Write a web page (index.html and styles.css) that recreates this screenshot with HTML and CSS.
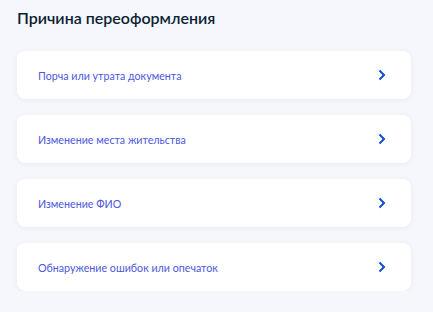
FILE: index.html
```html
<!DOCTYPE html>
<html lang="ru">
<head>
<meta charset="UTF-8">
<title>Причина переоформления</title>
<link rel="stylesheet" href="styles.css">
</head>
<body>
<div class="page">
    <h2>Причина переоформления</h2>
    <div class="reasons">
        <a class="reason" href="#">
            <span>Порча или утрата документа</span>
            <svg class="chevron" width="8" height="12" viewBox="0 0 8 12"><path d="M1.5 1.5 L6 6 L1.5 10.5" fill="none" stroke="#0d4cd3" stroke-width="2"/></svg>
        </a>
        <a class="reason" href="#">
            <span>Изменение места жительства</span>
            <svg class="chevron" width="8" height="12" viewBox="0 0 8 12"><path d="M1.5 1.5 L6 6 L1.5 10.5" fill="none" stroke="#0d4cd3" stroke-width="2"/></svg>
        </a>
        <a class="reason" href="#">
            <span>Изменение ФИО</span>
            <svg class="chevron" width="8" height="12" viewBox="0 0 8 12"><path d="M1.5 1.5 L6 6 L1.5 10.5" fill="none" stroke="#0d4cd3" stroke-width="2"/></svg>
        </a>
        <a class="reason" href="#">
            <span>Обнаружение ошибок или опечаток</span>
            <svg class="chevron" width="8" height="12" viewBox="0 0 8 12"><path d="M1.5 1.5 L6 6 L1.5 10.5" fill="none" stroke="#0d4cd3" stroke-width="2"/></svg>
        </a>
    </div>
</div>
</body>
</html>
```

FILE: styles.css
```css
body {
    margin: 0;
    background: #f5f7fc;
    font-family: Lato, "Open Sans", Arial, sans-serif;
    color: #0b1f33;
}
.page {
    padding: 8px 22px 0 17px;
}
h2 {
    font-size: 16px;
    font-weight: 600;
    line-height: 20px;
    margin: 0 0 23px;
}
.reasons {
    display: flex;
    flex-direction: column;
    gap: 16px;
}
.reason {
    display: flex;
    align-items: center;
    justify-content: space-between;
    height: 48px;
    padding: 0 25px 0 21px;
    background: #fff;
    border-radius: 8px;
    box-shadow: 0 1px 4px rgba(105, 120, 160, 0.12);
    text-decoration: none;
    color: #4d58dc;
    font-size: 10.7px;
}
.chevron {
    display: block;
}
```
